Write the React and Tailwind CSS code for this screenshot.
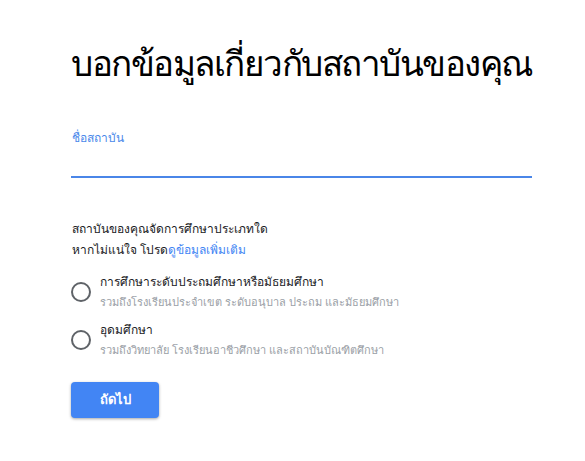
export default function App() {
  const options = [
    {
      title: 'การศึกษาระดับประถมศึกษาหรือมัธยมศึกษา',
      desc: 'รวมถึงโรงเรียนประจำเขต ระดับอนุบาล ประถม และมัธยมศึกษา',
    },
    {
      title: 'อุดมศึกษา',
      desc: 'รวมถึงวิทยาลัย โรงเรียนอาชีวศึกษา และสถาบันบัณฑิตศึกษา',
    },
  ];

  return (
    <div className="w-[585px] h-[461px] bg-white px-[71px] pt-[37px] font-['Tahoma','Noto_Sans','DejaVu_Sans',sans-serif]">
      <h1 className="text-[35px] leading-[52px] tracking-[-1.5px] whitespace-nowrap text-black">บอกข้อมูลเกี่ยวกับสถาบันของคุณ</h1>

      <div className="mt-[41px] w-[461px]">
        <label className="block text-[12px] leading-[16px] text-[#4a88ea] pl-[1px]">ชื่อสถาบัน</label>
        <div className="h-[30px]" />
        <div className="h-[2px] bg-[#4a86e8]" />
      </div>

      <div className="mt-[40px] text-[12px] leading-[21px] text-[#202124] pl-[1px]">
        <p>สถาบันของคุณจัดการศึกษาประเภทใด</p>
        <p>
          หากไม่แน่ใจ โปรด<a className="text-[#4285f4]">ดูข้อมูลเพิ่มเติม</a>
        </p>
      </div>

      <div className="mt-[12px] flex flex-col gap-[8px]">
        {options.map((o) => (
          <div key={o.title} className="flex items-center gap-[9px]">
            <div className="w-[20px] h-[20px] rounded-full border-2 border-[#5f6368] shrink-0" />
            <div>
              <div className="text-[12px] leading-[20px] text-[#202124] font-medium">{o.title}</div>
              <div className="text-[11px] leading-[20px] text-[#9aa0a6]">{o.desc}</div>
            </div>
          </div>
        ))}
      </div>

      <button className="mt-[22px] w-[88px] h-[36px] rounded-[4px] bg-[#4285f4] text-white text-[13px] font-bold shadow-[0_1px_3px_rgba(0,0,0,0.35)]">
        ถัดไป
      </button>
    </div>
  );
}
